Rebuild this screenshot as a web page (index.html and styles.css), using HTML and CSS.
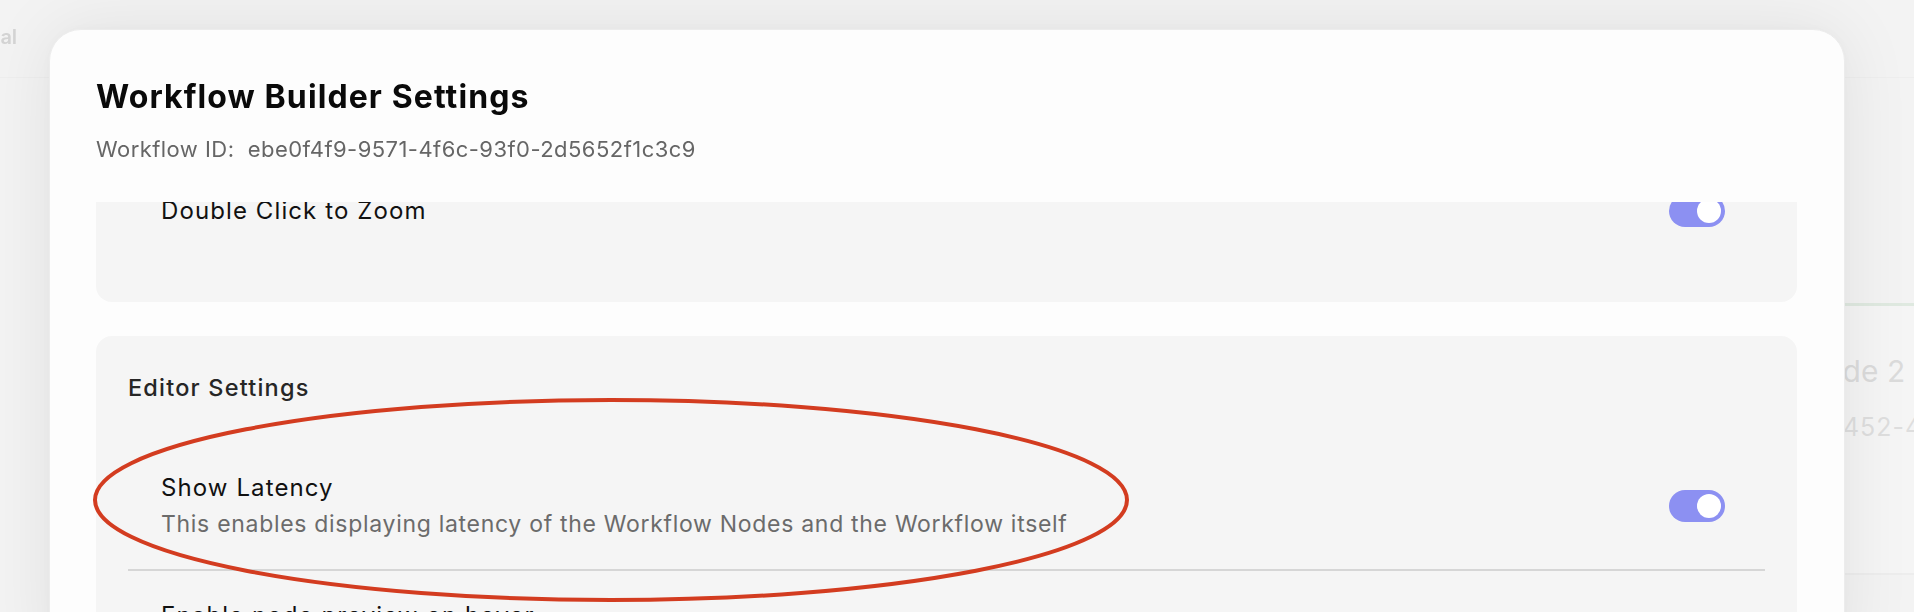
FILE: index.html
```html
<!DOCTYPE html>
<html lang="en">
<head>
<meta charset="utf-8">
<title>Workflow Builder Settings</title>
<link rel="stylesheet" href="styles.css">
</head>
<body>
<div class="app">
  <header class="app-header"><span class="app-title">Journal</span></header>
  <div class="canvas">
    <div class="node">
      <div class="node-name">Node 2</div>
      <div class="node-id">b8f17452-4a7e</div>
    </div>
  </div>
</div>

<div class="modal">
  <div class="modal-header">
    <h1 class="modal-title">Workflow Builder Settings</h1>
    <p class="modal-sub">Workflow ID:&nbsp; ebe0f4f9-9571-4f6c-93f0-2d5652f1c3c9</p>
  </div>
  <div class="modal-body">
    <div class="scroll-inner">
      <section class="card card-first">
        <h2 class="card-title">Canvas Settings</h2>
        <div class="row">
          <div class="row-text">
            <div class="row-label">Double Click to Zoom</div>
          </div>
          <span class="toggle on"><span class="knob"></span></span>
        </div>
      </section>
      <section class="card">
        <h2 class="card-title">Editor Settings</h2>
        <div class="row row-divided">
          <div class="row-text">
            <div class="row-label">Show Latency</div>
            <div class="row-desc">This enables displaying latency of the Workflow Nodes and the Workflow itself</div>
          </div>
          <span class="toggle on"><span class="knob"></span></span>
        </div>
        <div class="row">
          <div class="row-text">
            <div class="row-label">Enable node preview on hover</div>
            <div class="row-desc">This shows a preview of the Workflow Node output on hover</div>
          </div>
          <span class="toggle on"><span class="knob"></span></span>
        </div>
      </section>
    </div>
  </div>
</div>

<svg class="annotation" width="1914" height="612" viewBox="0 0 1914 612" aria-hidden="true">
  <ellipse cx="611" cy="500" rx="516" ry="100" fill="none" stroke="#d33c20" stroke-width="4"/>
</svg>
</body>
</html>
```

FILE: styles.css
```css
* { box-sizing: border-box; }

html, body {
  margin: 0;
  padding: 0;
  width: 1914px;
  height: 612px;
  overflow: hidden;
}

body {
  font-family: Inter, "Noto Sans", "Liberation Sans", sans-serif;
  background: #f3f3f3;
  color: #111;
  position: relative;
}

/* background application (faded behind the dialog) */
.app {
  height: 612px;
  display: flex;
  flex-direction: column;
  opacity: 0.35;
}

.app-header {
  height: 78px;
  border-bottom: 1px solid #e4e4e4;
  display: flex;
  align-items: flex-start;
  overflow: hidden;
}

.app-title {
  font-size: 20px;
  line-height: 24px;
  font-weight: 600;
  color: #9a9a9a;
  margin-left: -56px;
  margin-top: 25px;
}

.canvas {
  flex: 1;
  position: relative;
}

.node {
  position: absolute;
  left: 1700px;
  top: 225px;
  width: 320px;
  height: 272px;
  border-top: 3px solid #b9d7bd;
  border-bottom: 2px solid #e2e2e2;
  background: #fafafa;
  padding: 45px 0 0 102px;
}

.node-name {
  font-size: 30px;
  line-height: 40px;
  color: #b0b0b0;
}

.node-id {
  font-size: 25px;
  line-height: 34px;
  color: #b8b8b8;
  margin-top: 19px;
  margin-left: -27px;
  letter-spacing: 1px;
}

/* dialog */
.modal {
  position: absolute;
  left: 49px;
  top: 29px;
  width: 1796px;
  height: 640px;
  background: #fdfdfd;
  border: 1px solid #ececec;
  border-radius: 32px;
  box-shadow: 0 0 70px rgba(0, 0, 0, 0.08), 0 0 14px rgba(0, 0, 0, 0.03);
  display: flex;
  flex-direction: column;
  overflow: hidden;
}

.modal-header {
  padding: 48px 47px 0 46px;
}

.modal-title {
  margin: 0;
  font-size: 32px;
  line-height: 38px;
  font-weight: 700;
  color: #0a0a0a;
  letter-spacing: 1.1px;
}

.modal-sub {
  margin: 19px 0 0;
  font-size: 22px;
  line-height: 28px;
  color: #666;
  letter-spacing: 0.45px;
}

.modal-body {
  flex: 1;
  margin-top: 39px;
  padding: 0 47px 0 46px;
  overflow: hidden;
}

.scroll-inner {
  margin-top: -143px;
  display: flex;
  flex-direction: column;
  gap: 34px;
}

.card {
  background: #f5f5f5;
  border-radius: 16px;
  padding: 35px 32px 40px;
}

.card-first {
  padding-bottom: 46px;
}

.card-title {
  margin: 0 0 38px;
  font-size: 23.5px;
  line-height: 34px;
  font-weight: 500;
  color: #262626;
  letter-spacing: 1.2px;
}

.row {
  display: flex;
  align-items: center;
  justify-content: space-between;
  padding: 28px 40px 28px 33px;
}

.row-divided {
  border-bottom: 2px solid #d6d6d6;
}

.row-label {
  font-size: 24px;
  line-height: 34px;
  color: #111;
  letter-spacing: 1.1px;
}

.row-desc {
  margin-top: 2px;
  font-size: 23px;
  line-height: 34px;
  color: #6b6b6b;
  letter-spacing: 0.7px;
}

.toggle {
  flex: none;
  width: 56px;
  height: 32px;
  border-radius: 16px;
  background: #d4d4d4;
  display: flex;
  align-items: center;
  padding: 0 4px;
}

.toggle.on {
  background: #8c90f2;
  justify-content: flex-end;
}

.knob {
  width: 24px;
  height: 24px;
  border-radius: 50%;
  background: #fff;
}

.annotation {
  position: absolute;
  left: 0;
  top: 0;
  pointer-events: none;
}
```
